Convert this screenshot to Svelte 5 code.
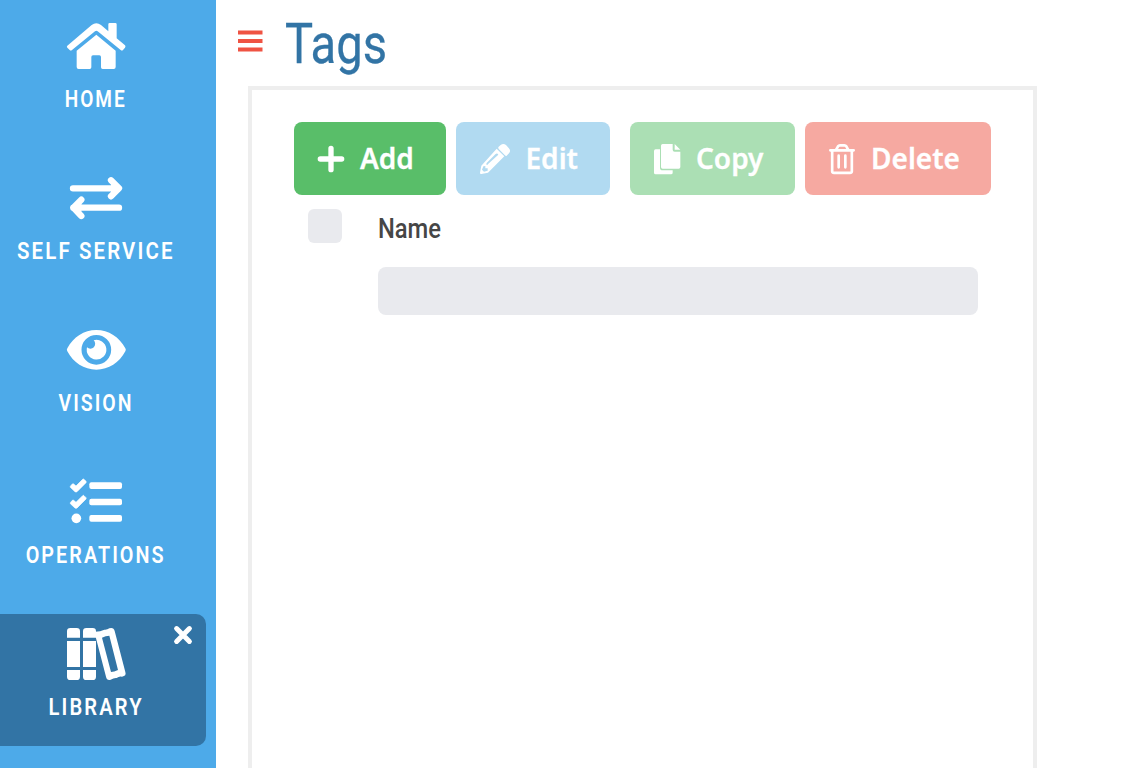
<script>
  const items = [
    { name: 'HOME', icon: 'home', box: '198 60 180 156', x: 64.7, width: 62 },
    { name: 'SELF SERVICE', icon: 'exchange', box: '198 36 180 156', x: 17, width: 157.6 },
    { name: 'VISION', icon: 'eye', box: '198 27 180 156', x: 58.6, width: 75 },
    { name: 'OPERATIONS', icon: 'tasks', box: '198 33 180 156', x: 25.7, width: 140 },
    { name: 'LIBRARY', icon: 'books', box: '198 69 180 156', x: 48.6, width: 95, active: true }
  ];
</script>

<div class="app">
  <nav>
    {#each items as item}
      <div class="item" class:active={item.active}>
        <svg class="icon" viewBox={item.box}>
          {#if item.icon === 'home'}
            <path d="M202 137 L275 75 Q289 64 303 75 L325 94 V73 Q325 69 329 69 H346 Q350 69 350 73 V115 L375 136 Q378 139 375 143 L369 150 Q366 153 362 150 L293 94 Q289 91 285 94 L216 150 Q212 153 209 150 L202 143 Q199 140 202 137Z" />
            <path d="M289 104 L347 152 V201 Q347 207 341 207 H308 Q303 207 303 202 V171 Q303 166 298 166 H279 Q274 166 274 171 V202 Q274 207 269 207 H236 Q230 207 230 201 V152Z" />
          {:else if item.icon === 'exchange'}
            <path d="M219 85H356 M333 61L357 85L333 109 M357 143H220 M244 119L220 143L244 168" fill="none" stroke="#fff" stroke-width="19" stroke-linecap="round" stroke-linejoin="round" />
            <path d="M333 70L350 85L333 100Z M244 128L227 143L244 158Z" />
          {:else if item.icon === 'eye'}
            <path fill-rule="evenodd" d="M202 100 C220 66 252 45 289 45 S358 66 376 100 Q379 104 376 109 C358 143 326 164 289 164 S220 143 202 109 Q199 104 202 100Z M289 60 A44.500 44.500 0 1 0 289 149 A44.500 44.500 0 1 0 289 60Z" />
            <path d="M281 76 A29.500 29.500 0 1 1 261 97 A14 14 0 0 0 281 76Z" />
          {:else if item.icon === 'tasks'}
            <g stroke="#fff" stroke-width="2" stroke-linejoin="round">
              <path d="M211 64L217 57Q219 55 221 57L228 63L248 43Q250 41 252 43L258 49Q259 51 258 53L231 80Q228 82 225 80L211 67Z" />
              <path d="M211 113L217 106Q219 104 221 106L228 112L248 92Q250 90 252 92L258 98Q259 100 258 102L231 129Q228 131 225 129L211 116Z" />
            </g>
            <circle cx="229" cy="160" r="14.500" />
            <rect x="268" y="52" width="98" height="20" rx="6" /><rect x="268" y="101" width="98" height="20" rx="6" /><rect x="268" y="150" width="98" height="20" rx="6" />
          {:else}
            <path d="M201 98V79Q201 69 211 69H230Q240 69 240 79V98Z M201 108H240V186H201Z M201 195H240V215Q240 225 230 225H211Q201 225 201 215Z M249 98V79Q249 69 259 69H278Q288 69 288 79V98Z M249 108H288V186H249Z M249 195H288V215Q288 225 278 225H259Q249 225 249 215Z" />
            <path fill-rule="evenodd" d="M286 80Q301 80 313 74Q321 75 328 70Q341 66 344 78L376 201Q380 213 366 215Q357 213 350 219Q342 218 332 224Q321 228 318 215L288 100Z M306 98L333 201Q342 201 354 195L328 92Q317 92 306 98Z" />
          {/if}
        </svg>
        <svg class="label" viewBox="0 0 206 32">
          <text x={item.x} y="25" textLength={item.width} lengthAdjust="spacingAndGlyphs">{item.name}</text>
        </svg>
        {#if item.active}
          <svg class="close" viewBox="0 0 20 20"><path d="M3.600 3.600L16.400 16.400M16.400 3.600L3.600 16.400" fill="none" stroke="#fff" stroke-width="5" stroke-linecap="round" /></svg>
        {/if}
      </div>
    {/each}
  </nav>

  <main>
    <header>
      <svg class="menu" viewBox="0 0 26 26"><path d="M1 6.400H25.500M1 15H25.500M1 23.600H25.500" stroke="#ef5343" stroke-width="4" /></svg>
      <svg class="title" width="120" height="86"><text x="0" y="63" textLength="102" lengthAdjust="spacingAndGlyphs">Tags</text></svg>
    </header>
    <section>
      <div class="toolbar">
        <button class="add">
          <svg viewBox="93 101 90 90"><path d="M103 147H167M135 115V179" fill="none" stroke="#fff" stroke-width="16" stroke-linecap="round" transform="translate(-3 -1)" /></svg>
          <span>Add</span>
        </button>
        <button class="edit">
          <svg viewBox="582 101 90 90">
            <path fill-rule="evenodd" d="M632 115L655 138L606 187L586 191Q582 192 582 187L586 166Z M602 158Q599 162 603 164Q606 163 607 160L637 133Q633 126 628 132Z M592 168L588 178L594 184L605 181V174H598V167Z" />
            <path d="M638 109L644 104Q652 98 660 104L668 113Q676 121 669 129L662 136Q660 138 656 134L639 117Q635 113 638 109Z" />
          </svg>
          <span>Edit</span>
        </button>
        <button class="copy">
          <svg viewBox="102 101 90 90">
            <path d="M120 117V172Q120 180 128 180H158V187Q158 192 153 192H107Q102 192 102 187V122Q102 117 107 117Z M128 101H158V118Q158 124 164 124H181V170Q181 175 176 175H128Q123 175 123 170V106Q123 101 128 101Z M164 101L181 118H164Z" />
          </svg>
          <span>Copy</span>
        </button>
        <button class="delete">
          <svg viewBox="627 101 90 90">
            <path d="M631 120H701M648 119L654 108Q656 105 660 105H673Q677 105 679 108L685 119M636.500 122V183Q637 187.500 642 187.500H690Q695 187.500 695.500 183V122M656 136V171M676 136V171" fill="none" stroke="#fff" stroke-width="8" stroke-linecap="round" />
          </svg>
          <span>Delete</span>
        </button>
      </div>
      <div class="table">
        <div class="check"></div>
        <div class="column">
          <svg class="name" width="80" height="38"><text x="0" y="29" textLength="63" lengthAdjust="spacingAndGlyphs">Name</text></svg>
          <div class="filter"></div>
        </div>
      </div>
    </section>
  </main>
</div>

<style>
  :global(body) { margin: 0; background: #fff; overflow: hidden; }
  * { box-sizing: border-box; }
  svg { display: block; fill: #fff; flex: none; }
  .app { display: flex; width: 1144px; height: 768px; overflow: hidden; }
  nav { width: 216px; background: #4daae9; padding-top: 6px; display: flex; flex-direction: column; gap: 20px; flex: none; }
  .item { position: relative; width: 206px; height: 132px; padding-top: 14px; border-radius: 0 10px 10px 0; flex: none; }
  .active { background: #3274a5; }
  .icon { width: 60px; height: 52px; margin-left: 66px; overflow: visible; }
  .label { width: 206px; height: 32px; margin-top: 10px; overflow: visible; }
  .label text { font: 600 24px Roboto, sans-serif; letter-spacing: 2.5px; }
  .close { position: absolute; width: 20px; height: 20px; right: 13px; top: 11px; }
  main { flex: 1; }
  header { height: 86px; display: flex; padding-left: 21px; }
  .menu { width: 26px; height: 26px; margin-top: 26px; margin-right: 22px; }
  .title { overflow: visible; }
  .title text { font: 400 56px Roboto, sans-serif; fill: #3274a5; stroke: #3274a5; stroke-width: .3px; }
  section { margin-left: 32px; width: 789px; height: 720px; border: 4px solid #eee; padding: 32px 42px; }
  .toolbar { display: flex; height: 73px; }
  button { height: 73px; border: 0; border-radius: 8px; padding: 0 0 0 24px; display: flex; align-items: center; color: #fff; font: 600 28px "Noto Sans", sans-serif; margin-right: 10px; }
  button svg { width: 30px; height: 30px; overflow: visible; }
  button span { margin-left: 16px; padding-bottom: 2px; white-space: nowrap; -webkit-text-stroke: .3px #fff; }
  .add { width: 152px; background: #59be69; }
  .add span { margin-left: 12px; }
  .edit { width: 154px; background: #b1daf1; margin-right: 20px; }
  .edit span { margin-left: 15.500px; }
  .copy { width: 165px; background: #abdfb4; margin-right: 10px; }
  .copy span { margin-left: 12px; }
  .delete { width: 186px; background: #f6a9a1; margin: 0; }
  .delete span { margin-left: 12px; }
  .table { display: flex; padding: 14px 0 0 14px; }
  .check { width: 34px; height: 34px; border-radius: 6px; background: #e9eaee; margin-right: 36px; }
  .name text { font: 500 28px Roboto, sans-serif; fill: #464646; }
  .filter { width: 600px; height: 48px; border-radius: 8px; background: #e9eaee; margin-top: 20px; }
</style>
